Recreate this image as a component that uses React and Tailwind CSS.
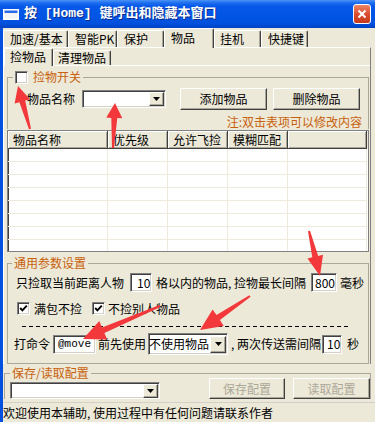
import React from "react";

const raised =
  "bg-[#ECE9D8] border border-t-white border-l-white border-r-[#404040] border-b-[#404040] shadow-[inset_-1px_-1px_0_#ACA899]";
const sunken =
  "bg-white border border-t-[#808080] border-l-[#808080] border-r-white border-b-white shadow-[inset_1px_1px_0_#404040,inset_-1px_-1px_0_#D4D0C8]";

function DropBtn({ className = "w-[15px] h-[14px]" }) {
  return (
    <div className={`${raised} ${className} shrink-0 flex items-center justify-center`}>
      <svg width="7" height="4" viewBox="0 0 7 4">
        <path d="M0 0H7L3.5 4Z" fill="#000" />
      </svg>
    </div>
  );
}

function Combo({ className = "" }) {
  return (
    <div className={`${sunken} ${className} shrink-0 flex items-center justify-end pr-[1px]`}>
      <DropBtn />
    </div>
  );
}

function Check({ checked }) {
  return (
    <div className={`${sunken} w-[13px] h-[13px] shrink-0 flex items-center justify-center`}>
      {checked && (
        <svg width="9" height="9" viewBox="0 0 9 9">
          <path d="M1.2 4 L3.4 6.3 L7.8 1.6" stroke="#000" strokeWidth="1.9" fill="none" />
        </svg>
      )}
    </div>
  );
}

function Btn({ className = "", disabled, children }) {
  return (
    <div
      className={`${raised} ${className} shrink-0 flex items-center justify-center ${
        disabled ? "text-[#ACA899]" : "text-black"
      }`}
    >
      {children}
    </div>
  );
}

function Input({ className = "", children }) {
  return (
    <div className={`${sunken} ${className} shrink-0 flex items-center whitespace-nowrap overflow-hidden`}>
      {children}
    </div>
  );
}

function Tab({ w, selected, children, pl = "pl-[6px]", small }) {
  const h = small ? (selected ? "h-[18px]" : "h-[15px]") : selected ? "h-[20px]" : "h-[17px]";
  return (
    <div
      className={`${w} ${h} ${pl} shrink-0 flex items-center whitespace-nowrap bg-[#ECE9D8] border-t border-l border-r border-t-white border-l-white border-r-[#404040] shadow-[inset_-1px_0_0_#ACA899] rounded-t-[2px] ${
        selected ? "relative z-10 mb-[-1px] pb-[2px]" : ""
      }`}
    >
      {children}
    </div>
  );
}

function arrowPts(x1, y1, x2, y2, head, hw, sw0 = 1, sw1 = 3) {
  const dx = x2 - x1;
  const dy = y2 - y1;
  const L = Math.hypot(dx, dy);
  const ux = dx / L;
  const uy = dy / L;
  const px = -uy;
  const py = ux;
  const bx = x2 - ux * head;
  const by = y2 - uy * head;
  const p = [
    [x1 + px * sw0, y1 + py * sw0],
    [bx + px * sw1, by + py * sw1],
    [bx + px * hw, by + py * hw],
    [x2, y2],
    [bx - px * hw, by - py * hw],
    [bx - px * sw1, by - py * sw1],
    [x1 - px * sw0, y1 - py * sw0],
  ];
  return p.map((q) => q.map((v) => v.toFixed(1)).join(",")).join(" ");
}

const arrows = [
  [30, 129, 18, 86, 16, 8],
  [113, 148, 115, 103, 15, 8],
  [309, 231, 320, 276, 20, 8],
  [250, 296, 200, 330, 22, 10],
  [160, 306, 83, 339, 22, 10],
];

const cols = ["w-[100px]", "w-[60px]", "w-[60px]", "w-[60px]", "w-[79px]"];
const heads = ["物品名称", "优先级", "允许飞捡", "模糊匹配", ""];

export default function App() {
  return (
    <div className="relative w-[375px] h-[422px] overflow-hidden bg-[#ECE9D8] font-['Noto_Sans_CJK_SC','Noto_Sans',sans-serif] text-[12px] leading-[14px] text-black">
      {/* title bar */}
      <div className="h-[28px] flex items-center bg-[linear-gradient(to_bottom,#4A93F6_0%,#1F6FF0_10%,#0758E8_22%,#0055E5_60%,#0050DC_85%,#0041C4_100%)]">
        <svg className="ml-[3px] shrink-0" width="16" height="11" viewBox="0 0 16 11">
          <rect x="0" y="0" width="16" height="11" fill="#fff" />
          <rect x="1.5" y="1.5" width="13" height="2.5" fill="#2A6CE8" />
          <rect x="1.5" y="4" width="13" height="5.5" fill="#F4F4F4" />
        </svg>
        <span className="ml-[5px] text-[13px] leading-[16px] font-bold text-white whitespace-nowrap font-['Liberation_Mono','Noto_Sans_CJK_SC',monospace] [text-shadow:1px_1px_0_#0B2C8C]">
          按 [Home] 键呼出和隐藏本窗口
        </span>
        <div className="ml-auto mr-[4px] w-[18px] h-[20px] rounded-[3px] border border-white bg-[linear-gradient(to_bottom,#EC8466,#DA4A2C_55%,#C43A1E)] flex items-center justify-center">
          <svg width="10" height="10" viewBox="0 0 10 10">
            <path d="M1.5 1.5L8.5 8.5M8.5 1.5L1.5 8.5" stroke="#fff" strokeWidth="2" />
          </svg>
        </div>
      </div>

      {/* body */}
      <div className="flex h-[394px]">
        <div className="w-[3px] shrink-0 bg-[#0250E0]" />
        <div className="flex-1 flex flex-col">
          {/* top tabs */}
          <div className="h-[19px] flex items-end">
            <Tab w="w-[65px]">加速/基本</Tab>
            <Tab w="w-[49px]">智能PK</Tab>
            <Tab w="w-[47px]">保护</Tab>
            <Tab w="w-[50px]" selected>
              物品
            </Tab>
            <Tab w="w-[47px]" pl="pl-[5px]">
              挂机
            </Tab>
            <Tab w="w-[47px]">快捷键</Tab>
          </div>

          {/* outer panel */}
          <div className="w-[368px] border-t border-l border-r border-t-white border-l-white border-r-[#808080]">
            <div className="h-[17px] flex items-end">
              <Tab w="w-[49px]" small selected pl="pl-[5px]">
                捡物品
              </Tab>
              <Tab w="w-[58px]" small pl="pl-[4px]">
                清理物品
              </Tab>
            </div>

            <div className="border-t border-white">
              {/* group 1 */}
              <fieldset className="ml-[3px] mt-[4px] w-[362px] border border-b-0 border-[#ACA899]">
                <legend className="ml-[5px] px-[2px]">
                  <span className="h-[14px] inline-flex items-center gap-[5px] align-top">
                    <Check />
                    <span className="text-[#C8600A] leading-[14px]">捡物开关</span>
                  </span>
                </legend>
                <div className="mt-[4px] h-[22px] flex items-center pl-[19px]">
                  <span className="w-[48px] shrink-0 whitespace-nowrap">物品名称</span>
                  <Combo className="ml-[7px] w-[84px] h-[18px]" />
                  <Btn className="ml-[14px] w-[87px] h-[22px]">添加物品</Btn>
                  <Btn className="ml-[6px] w-[87px] h-[22px]">删除物品</Btn>
                </div>
                <div className="mt-[5px] h-[14px] flex justify-end pr-[6px] text-[#C8600A] whitespace-nowrap">
                  注:双击表项可以修改内容
                </div>
              </fieldset>

              {/* list */}
              <div className="ml-[3px] mt-[1px] w-[362px] h-[122px] bg-white border border-[#808080] shadow-[inset_1px_1px_0_#404040] overflow-hidden flex flex-col">
                <div className="h-[18px] flex shrink-0 bg-[#ECE9D8]">
                  {heads.map((t, i) => (
                    <div
                      key={i}
                      className={`${cols[i]} h-[18px] shrink-0 flex items-center pl-[5px] whitespace-nowrap border-r border-b border-r-[#404040] border-b-[#404040] shadow-[inset_1px_1px_0_#fff,inset_-1px_-1px_0_#ACA899]`}
                    >
                      {t}
                    </div>
                  ))}
                </div>
                {Array.from({ length: 8 }).map((_, r) => (
                  <div key={r} className="h-[13px] flex shrink-0">
                    {cols.map((c, i) => (
                      <div key={i} className={`${c} h-[13px] shrink-0 border-r border-b border-[#EEEBDD]`} />
                    ))}
                  </div>
                ))}
              </div>

              {/* group 2 */}
              <fieldset className="ml-[3px] mt-[4px] w-[362px] border border-[#ACA899] pb-[8px]">
                <legend className="ml-[4px] px-[2px] text-[#C8600A] leading-[14px]">通用参数设置</legend>
                <div className="mt-[3px] h-[19px] flex items-center pl-[8px] whitespace-nowrap">
                  <span className="w-[108px] shrink-0">只捡取当前距离人物</span>
                  <Input className="ml-[6px] w-[22px] h-[19px] pl-[6px]">10</Input>
                  <span className="ml-[4px] w-[151px] shrink-0">格以内的物品, 捡物最长间隔</span>
                  <Input className="ml-[4px] w-[26px] h-[19px] pl-[3px]">800</Input>
                  <span className="ml-[3px]">毫秒</span>
                </div>
                <div className="mt-[10px] h-[13px] flex items-center pl-[9px] whitespace-nowrap">
                  <Check checked />
                  <span className="ml-[4px] w-[48px] shrink-0">满包不捡</span>
                  <span className="ml-[10px]">
                    <Check checked />
                  </span>
                  <span className="ml-[3px]">不捡别人物品</span>
                </div>
                <div className="ml-[14px] mt-[11px] w-[328px] h-[1px] bg-[repeating-linear-gradient(to_right,#000_0_4px,transparent_4px_7px)]" />
                <div className="mt-[6px] h-[22px] flex items-center pl-[6px] whitespace-nowrap">
                  <span className="w-[36px] shrink-0">打命令</span>
                  <Input className="ml-[3px] w-[43px] h-[19px] pl-[4px] font-['Liberation_Mono',monospace] text-[11px]">
                    @move
                  </Input>
                  <span className="ml-[2px] w-[48px] shrink-0">前先使用</span>
                  <div className={`${sunken} ml-[2px] w-[80px] h-[22px] shrink-0 flex items-center pr-[1px] overflow-hidden`}>
                    <span className="w-[61px] shrink-0 whitespace-nowrap">不使用物品</span>
                    <DropBtn className="w-[16px] h-[17px]" />
                  </div>
                  <span className="ml-[3px] w-[91px] shrink-0">, 两次传送需间隔</span>
                  <Input className="ml-[0px] w-[20px] h-[19px] pl-[4px]">10</Input>
                  <span className="ml-[5px]">秒</span>
                </div>
              </fieldset>
            </div>
          </div>

          {/* group 3 */}
          <fieldset className="ml-[1px] mt-[2px] w-[367px] border border-b-0 border-[#ACA899]">
            <legend className="ml-[5px] px-[2px] text-[#C8600A] leading-[14px]">保存/读取配置</legend>
            <div className="-mt-[2px] h-[21px] flex items-end pl-[5px]">
              <Combo className="w-[150px] h-[17px]" />
              <Btn className="ml-[49px] w-[76px] h-[21px]" disabled>
                保存配置
              </Btn>
              <Btn className="ml-[8px] w-[77px] h-[21px]" disabled>
                读取配置
              </Btn>
            </div>
          </fieldset>

          {/* status */}
          <div className="mt-auto h-[20px] border-t border-[#D4D0C8] flex items-center whitespace-nowrap">
            欢迎使用本辅助, 使用过程中有任何问题请联系作者
          </div>
        </div>
      </div>

      {/* annotation arrows */}
      <svg className="absolute inset-0 pointer-events-none" width="375" height="422" viewBox="0 0 375 422">
        {arrows.map((a, i) => (
          <polygon key={i} points={arrowPts(a[0], a[1], a[2], a[3], a[4], a[5])} fill="#F2383A" />
        ))}
      </svg>
    </div>
  );
}
